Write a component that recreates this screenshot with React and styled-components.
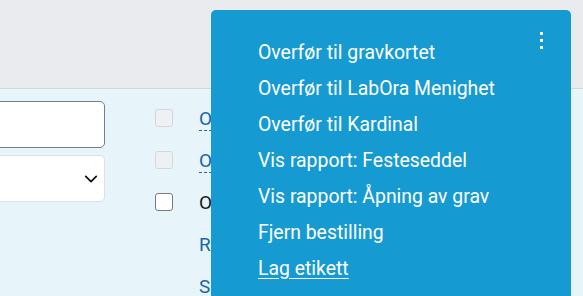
import React from 'react'
import styled, { createGlobalStyle } from 'styled-components'

const GlobalStyle = createGlobalStyle`
  html, body {
    margin: 0;
    padding: 0;
    height: 296px;
    overflow: hidden;
    font-family: Roboto, "Liberation Sans", sans-serif;
  }
`

const Page = styled.div`
  position: relative;
  width: 583px;
  height: 296px;
  overflow: hidden;
  background: #e7f4fa;
`

const Header = styled.div`
  height: 88px;
  background: #e9ebef;
  border-bottom: 1px solid #d3d6db;
`

const Main = styled.div`
  display: flex;
  gap: 50px;
`

const FormColumn = styled.div`
  display: flex;
  flex-direction: column;
  gap: 7px;
  width: 117px;
  margin-left: -12px;
  padding-top: 12px;
`

const TextInput = styled.div`
  height: 45px;
  background: #fff;
  border: 1px solid #75808a;
  border-radius: 5px;
`

const Select = styled.div`
  height: 45px;
  background: #fff;
  border: 1px solid #dde1e5;
  border-radius: 5px;
  display: flex;
  align-items: center;
  justify-content: flex-end;
  padding-right: 6px;
`

const List = styled.div`
  display: flex;
  flex-direction: column;
  padding-top: 8px;
`

const Row = styled.div`
  height: 42px;
  display: flex;
  align-items: center;
  gap: 26px;
  padding-left: ${p => (p.$indent ? '44px' : '0')};
`

const Check = styled.span`
  width: 16px;
  height: 16px;
  border-radius: 3px;
  border: 1px solid ${p => (p.$disabled ? '#d3d7db' : '#777b80')};
  background: ${p => (p.$disabled ? '#eef1f4' : '#fff')};
  flex: none;
`

const Label = styled.span`
  font-size: 19px;
  white-space: nowrap;
  color: ${p => (p.$plain ? '#15191d' : '#1667a8')};
  text-decoration: ${p => (p.$dashed ? 'underline dashed' : 'none')};
  text-decoration-color: #1667a8;
  text-underline-offset: 5px;
  text-decoration-thickness: 1px;
`

const Menu = styled.div`
  position: absolute;
  left: 211px;
  top: 10px;
  width: 360px;
  height: 320px;
  background: #169ad2;
  border-radius: 5px;
  padding-top: 24px;
  box-sizing: border-box;
`

const Kebab = styled.div`
  position: absolute;
  top: 22px;
  right: 28px;
  display: flex;
  flex-direction: column;
  gap: 4px;
`

const Dot = styled.span`
  width: 3px;
  height: 3px;
  background: #fff;
`

const MenuItem = styled.div`
  height: 36px;
  display: flex;
  align-items: center;
  padding-left: 47px;
  font-size: 19.4px;
  color: #fff;
  text-decoration: ${p => (p.$active ? 'underline' : 'none')};
  text-underline-offset: 3px;
`

const Chevron = () => (
  <svg width="14" height="14" viewBox="0 0 16 16" fill="none">
    <path d="M2 5l6 6 6-6" stroke="#111" strokeWidth="2" strokeLinecap="round" strokeLinejoin="round" />
  </svg>
)

const items = [
  'Overfør til gravkortet',
  'Overfør til LabOra Menighet',
  'Overfør til Kardinal',
  'Vis rapport: Festeseddel',
  'Vis rapport: Åpning av grav',
  'Fjern bestilling',
  'Lag etikett',
]

export default function App() {
  return (
    <Page>
      <GlobalStyle />
      <Header />
      <Main>
        <FormColumn>
          <TextInput />
          <Select>
            <Chevron />
          </Select>
        </FormColumn>
        <List>
          <Row>
            <Check $disabled />
            <Label $dashed>Overført</Label>
          </Row>
          <Row>
            <Check $disabled />
            <Label $dashed>Overført</Label>
          </Row>
          <Row>
            <Check />
            <Label $plain>Ordre</Label>
          </Row>
          <Row $indent>
            <Label>Rediger</Label>
          </Row>
          <Row $indent>
            <Label>Slett</Label>
          </Row>
        </List>
      </Main>
      <Menu>
        <Kebab>
          <Dot />
          <Dot />
          <Dot />
        </Kebab>
        {items.map((t, i) => (
          <MenuItem key={t} $active={i === items.length - 1}>
            {t}
          </MenuItem>
        ))}
      </Menu>
    </Page>
  )
}
